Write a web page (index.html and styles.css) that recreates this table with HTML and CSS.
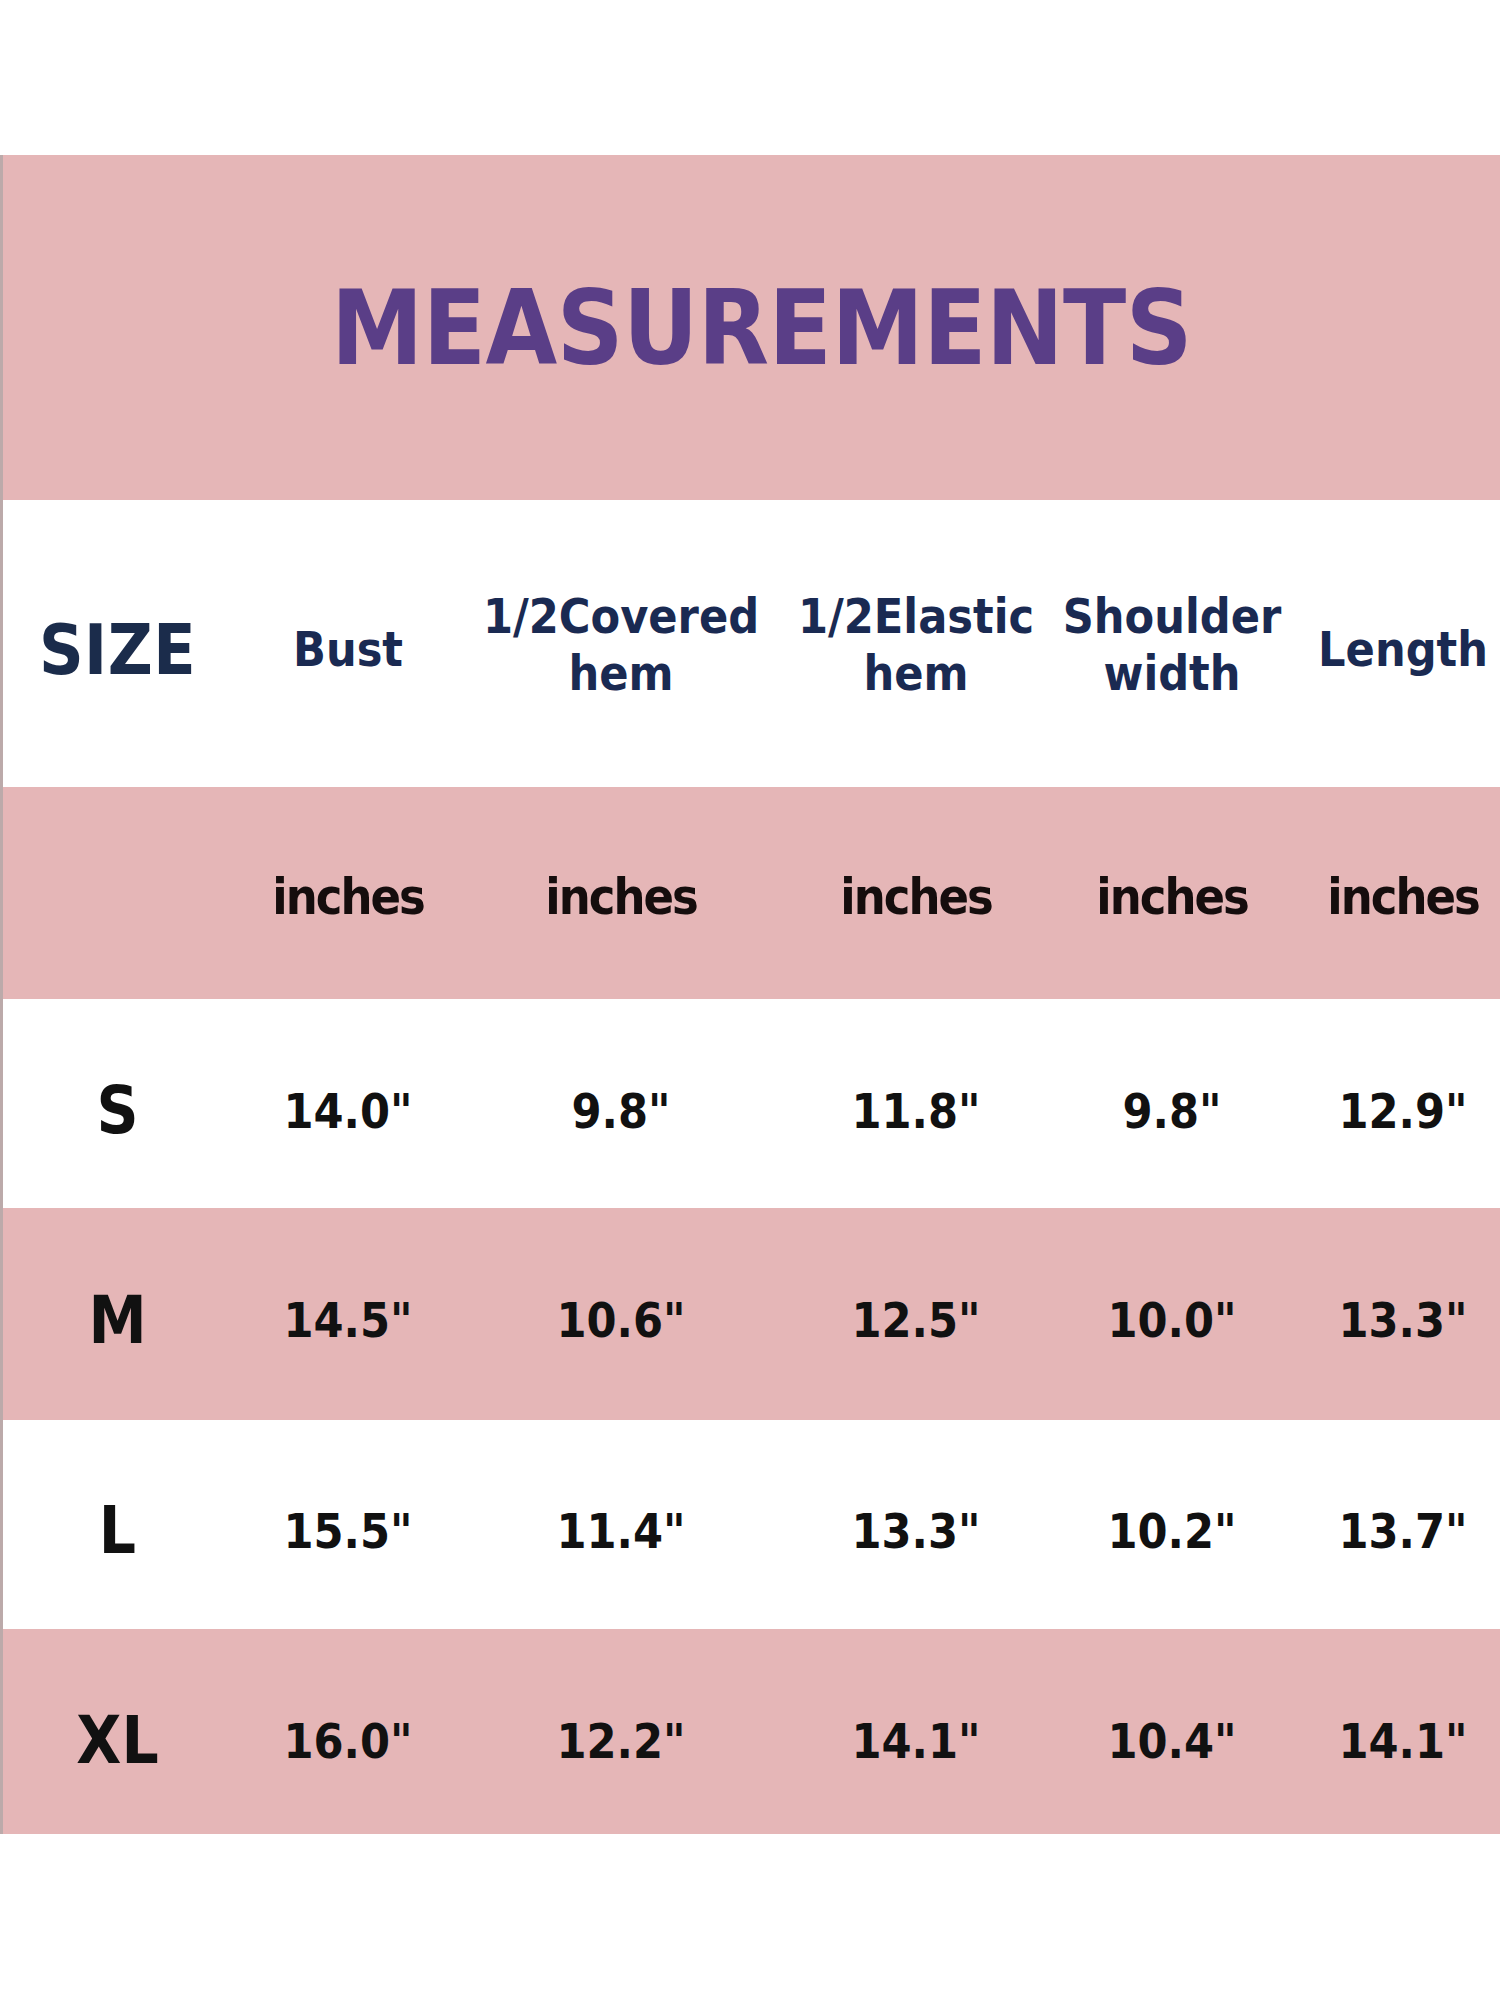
FILE: index.html
```html
<!DOCTYPE html>
<html lang="en">
<head>
<meta charset="utf-8">
<title>Measurements</title>
<link rel="stylesheet" href="styles.css">
</head>
<body>
<div class="sheet">
  <div class="chart">
    <div class="title-band">
      <h1 class="title">MEASUREMENTS</h1>
    </div>

    <div class="row row-head white">
      <div class="cell size-head single">SIZE</div>
      <div class="cell head single">Bust</div>
      <div class="cell head double">1/2Covered<br>hem</div>
      <div class="cell head double">1/2Elastic<br>hem</div>
      <div class="cell head double">Shoulder<br>width</div>
      <div class="cell head single last">Length</div>
    </div>

    <div class="row row-units pink">
      <div class="cell"></div>
      <div class="cell unit">inches</div>
      <div class="cell unit">inches</div>
      <div class="cell unit">inches</div>
      <div class="cell unit">inches</div>
      <div class="cell unit last">inches</div>
    </div>

    <div class="row row-s white">
      <div class="cell size">S</div>
      <div class="cell val">14.0"</div>
      <div class="cell val">9.8"</div>
      <div class="cell val">11.8"</div>
      <div class="cell val">9.8"</div>
      <div class="cell val last">12.9"</div>
    </div>

    <div class="row row-m pink">
      <div class="cell size">M</div>
      <div class="cell val">14.5"</div>
      <div class="cell val">10.6"</div>
      <div class="cell val">12.5"</div>
      <div class="cell val">10.0"</div>
      <div class="cell val last">13.3"</div>
    </div>

    <div class="row row-l white">
      <div class="cell size">L</div>
      <div class="cell val">15.5"</div>
      <div class="cell val">11.4"</div>
      <div class="cell val">13.3"</div>
      <div class="cell val">10.2"</div>
      <div class="cell val last">13.7"</div>
    </div>

    <div class="row row-xl pink">
      <div class="cell size">XL</div>
      <div class="cell val">16.0"</div>
      <div class="cell val">12.2"</div>
      <div class="cell val">14.1"</div>
      <div class="cell val">10.4"</div>
      <div class="cell val last">14.1"</div>
    </div>
  </div>
</div>
</body>
</html>
```

FILE: styles.css
```css
html, body {
  margin: 0;
  padding: 0;
  background: #ffffff;
}

body {
  width: 1500px;
  height: 2000px;
  overflow: hidden;
  font-family: "DejaVu Sans Condensed", "DejaVu Sans", Verdana, sans-serif;
  font-stretch: condensed;
  font-weight: bold;
}

.sheet {
  padding-top: 155px;
}

.chart {
  border-left: 3px solid #bcaaaa;
}

.pink {
  background: #e5b6b7;
}

.white {
  background: #ffffff;
}

.title-band {
  height: 345px;
  display: flex;
  align-items: center;
  justify-content: center;
  padding-left: 20px;
  box-sizing: border-box;
  background: #e5b6b7;
}

.title {
  margin: 0;
  padding-top: 2px;
  font-size: 103px;
  font-weight: bold;
  line-height: 1.164;
  color: #5a3e87;
  letter-spacing: -0.5px;
}

.row {
  display: grid;
  grid-template-columns: 229px 232px 314px 276px 236px 210px;
  align-items: center;
}

.cell {
  text-align: center;
  white-space: nowrap;
}

.cell.last {
  padding-left: 16px;
}

.row-head { height: 287px; }
.row-units { height: 212px; }
.row-s { height: 209px; }
.row-m { height: 212px; }
.row-l { height: 209px; }
.row-xl { height: 205px; }

.size-head {
  font-size: 69px;
  letter-spacing: 0.5px;
  color: #1b2c4b;
}

.head {
  font-size: 48px;
  line-height: 57px;
  color: #1a2a52;
}

.single {
  padding-top: 12px;
}

.double {
  padding-top: 2px;
}

.unit {
  font-size: 50px;
  letter-spacing: -2px;
  color: #150d0d;
  padding-top: 7px;
}

.size {
  font-size: 65px;
  color: #111111;
}

.val {
  font-size: 48px;
  color: #111111;
}

.row-s .cell { padding-top: 14px; }
.row-m .cell { padding-top: 12px; }
.row-l .cell { padding-top: 12px; }
.row-xl .cell { padding-top: 18px; }

.row-s .cell.last,
.row-m .cell.last,
.row-l .cell.last,
.row-xl .cell.last {
  padding-left: 16px;
}
```
